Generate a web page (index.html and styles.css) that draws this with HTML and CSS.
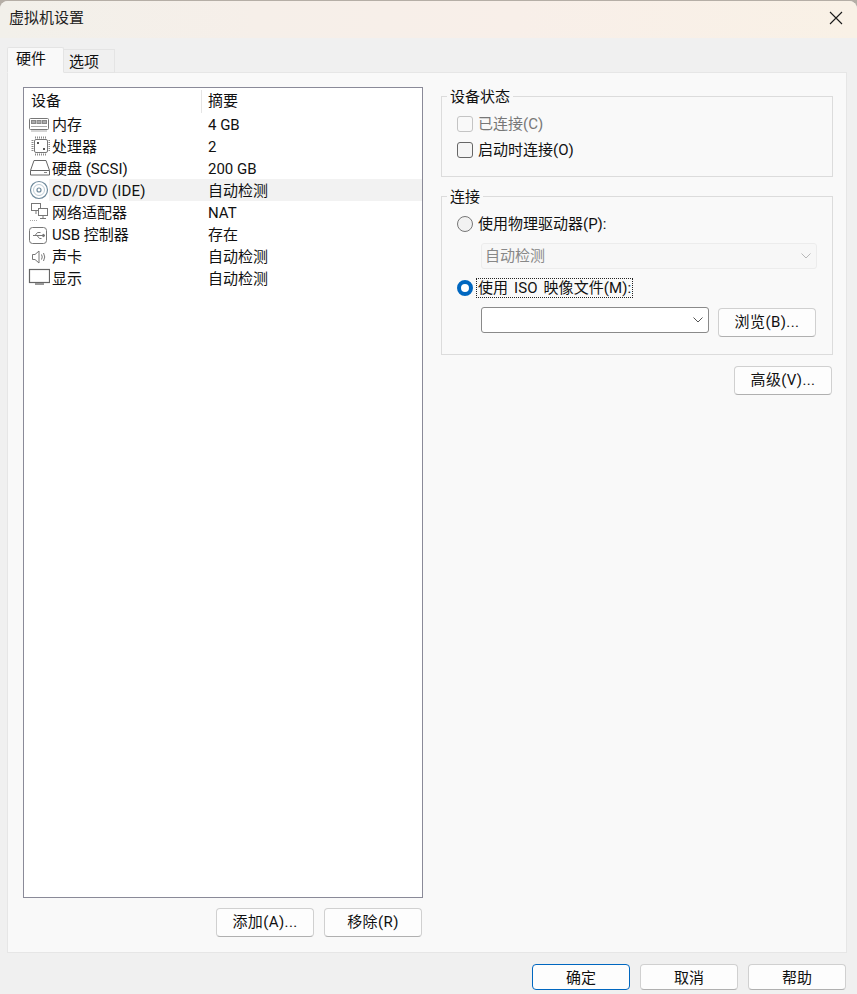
FILE: index.html
```html
<!DOCTYPE html>
<html lang="zh-CN">
<head>
<meta charset="utf-8">
<title>虚拟机设置</title>
<link rel="stylesheet" href="styles.css">
</head>
<body>
<div class="window">
  <header class="titlebar">
    <span class="title">虚拟机设置</span>
    <svg class="close" width="14" height="14" viewBox="0 0 14 14"><path d="M1 1L13 13M13 1L1 13" stroke="#1a1a1a" stroke-width="1.1" fill="none"/></svg>
  </header>
  <div class="tabs">
    <div class="tab active">硬件</div>
    <div class="tab">选项</div>
  </div>
  <main class="panel">
    <section class="left">
      <div class="list">
        <div class="list-head">
          <div class="h1">设备</div>
          <div class="h2">摘要</div>
        </div>
        <div class="row">
          <span class="ico"><svg width="22" height="22" viewBox="0 0 22 22" fill="none" stroke="#777"><rect x="1.500" y="5.500" width="19" height="11" rx="1"/><rect x="3.500" y="7.500" width="4" height="3" fill="#aaa" stroke="#888"/><rect x="9" y="7.500" width="4" height="3" fill="#aaa" stroke="#888"/><rect x="14.500" y="7.500" width="4" height="3" fill="#aaa" stroke="#888"/><path d="M3 13.500h16M3 18h16" stroke="#aaa"/></svg></span>
          <span class="name">内存</span><span class="val">4 GB</span>
        </div>
        <div class="row">
          <span class="ico"><svg width="22" height="22" viewBox="0 0 22 22" fill="none" stroke="#777"><rect x="6.500" y="4.500" width="13" height="13" rx="1.500"/><path d="M7 2.500h12M7 19.500h12M4.500 5v12M21.500 5v12" stroke="#8a8a8a" stroke-width="2" stroke-dasharray="1 1"/><rect x="9" y="7" width="2" height="2" fill="#555" stroke="none"/><rect x="15" y="13" width="2" height="2" fill="#555" stroke="none"/></svg></span>
          <span class="name">处理器</span><span class="val">2</span>
        </div>
        <div class="row">
          <span class="ico"><svg width="22" height="22" viewBox="0 0 22 22" fill="none" stroke="#666"><path d="M2.500 13.500L6 3.500h12l3.500 10v4.500h-19zM2.500 13.500h19"/><path d="M16 15.500h3" stroke="#888"/></svg></span>
          <span class="name">硬盘 (SCSI)</span><span class="val">200 GB</span>
        </div>
        <div class="row selected">
          <span class="ico"><svg width="22" height="22" viewBox="0 0 22 22" fill="none" stroke="#6f8a9c"><circle cx="11" cy="11" r="8.500" stroke-width="1.200"/><circle cx="11" cy="11" r="5.500" stroke="#bccbd5"/><circle cx="11" cy="11" r="2" stroke-width="1.200"/></svg></span>
          <span class="name wide">CD/DVD (IDE)</span><span class="val">自动检测</span>
        </div>
        <div class="row">
          <span class="ico"><svg width="22" height="22" viewBox="0 0 22 22" fill="none" stroke="#777"><rect x="3.500" y="2.500" width="9" height="7"/><path d="M8 10v3"/><rect x="10.500" y="7.500" width="9" height="7" fill="#fff"/><path d="M15 15v2M12 17.500h6" /><path d="M2 19.500h8" stroke="#aaa" stroke-dasharray="1 1"/></svg></span>
          <span class="name">网络适配器</span><span class="val">NAT</span>
        </div>
        <div class="row">
          <span class="ico"><svg width="22" height="22" viewBox="0 0 22 22" fill="none" stroke="#777"><rect x="1.500" y="4.500" width="17" height="16" rx="3"/><path d="M5 12.500h10M7 12.500l2.500-3h3M9 12.500l2.500 3h2" stroke-width="1"/><path d="M15 11l2 1.500-2 1.500z" fill="#777"/></svg></span>
          <span class="name">USB 控制器</span><span class="val">存在</span>
        </div>
        <div class="row">
          <span class="ico"><svg width="22" height="22" viewBox="0 0 22 22" fill="none" stroke="#777"><path d="M4.500 9.500h2.500l4-3.500v12l-4-3.500H4.500z"/><path d="M13.500 9.500q1.500 2.500 0 5M15.500 8q2.500 4 0 8" stroke-width="1"/></svg></span>
          <span class="name">声卡</span><span class="val">自动检测</span>
        </div>
        <div class="row">
          <span class="ico"><svg width="22" height="22" viewBox="0 0 22 22" fill="none" stroke="#666"><rect x="1.500" y="2.500" width="20" height="13" stroke-width="1.200"/><path d="M7 17h9" stroke-width="2" stroke="#999"/></svg></span>
          <span class="name">显示</span><span class="val">自动检测</span>
        </div>
      </div>
      <div class="btn-row">
        <button class="btn">添加(A)...</button>
        <button class="btn">移除(R)</button>
      </div>
    </section>
    <section class="right">
      <div class="group status">
        <div class="legend">设备状态</div>
        <div class="opt disabled"><span class="check"></span><span>已连接(C)</span></div>
        <div class="opt"><span class="check"></span><span>启动时连接(O)</span></div>
      </div>
      <div class="group conn">
        <div class="legend">连接</div>
        <div class="opt"><span class="radio"></span><span>使用物理驱动器(P):</span></div>
        <div class="select off"><span>自动检测</span><svg width="10" height="6" viewBox="0 0 10 6"><path d="M.5.5L5 5 9.500.5" fill="none" stroke="#b8b8b8"/></svg></div>
        <div class="opt on"><span class="radio checked"></span><span class="focus">使用 ISO 映像文件(M):</span></div>
        <div class="iso-row">
          <div class="select iso"><span></span><svg width="10" height="6" viewBox="0 0 10 6"><path d="M.5.5L5 5 9.500.5" fill="none" stroke="#555"/></svg></div>
          <button class="btn">浏览(B)...</button>
        </div>
      </div>
      <div class="adv"><button class="btn">高级(V)...</button></div>
    </section>
  </main>
  <footer class="footer">
    <button class="btn small primary">确定</button>
    <button class="btn small">取消</button>
    <button class="btn small">帮助</button>
  </footer>
</div>
</body>
</html>
```
FILE: styles.css
```css
* { box-sizing: border-box; }
html, body { margin: 0; height: 100%; }
body {
  background: #b5aea6;
  font: 15px/22px Roboto, "Noto Sans CJK SC", sans-serif;
  color: #111;
  overflow: hidden;
}
.window {
  height: 994px;
  margin-top: 1px;
  display: flex;
  flex-direction: column;
  background: #f0f0f0;
  border-radius: 8px 8px 0 0;
  overflow: hidden;
}
.titlebar {
  height: 37px;
  flex: none;
  display: flex;
  align-items: center;
  justify-content: space-between;
  padding: 0 14px 3px 9px;
  background: linear-gradient(90deg, #f2f0ea 0%, #f6efe9 30%, #f8efe9 60%, #f9f1e6 100%);
}
.title { font-size: 15px; color: #222; }
.tabs {
  height: 35px;
  flex: none;
  display: flex;
  align-items: flex-end;
  padding-left: 7px;
  margin-bottom: -1px;
  position: relative;
  z-index: 1;
}
.tab {
  width: 51px;
  height: 24px;
  padding-left: 5px;
  background: #f0f0f0;
  border: 1px solid #e4e4e4;
  border-bottom: 1px solid #e4e4e4;
  border-left: none;
  line-height: 24px;
  font-size: 15px;
}
.tab.active {
  width: 57px;
  height: 26px;
  padding-left: 8px;
  line-height: 22px;
  background: #f9f9f9;
  border-left: 1px solid #e4e4e4;
  border-bottom-color: #f9f9f9;
  border-radius: 2px 2px 0 0;
}
.panel {
  height: 881px;
  flex: none;
  margin: 0 10px 0 7px;
  background: #f9f9f9;
  border: 1px solid #e6e6e6;
  display: flex;
  padding: 14px 13px 15px 15px;
  gap: 18px;
}
.left { width: 400px; flex: none; display: flex; flex-direction: column; }
.list {
  height: 811px;
  background: #fff;
  border: 1px solid #8a8a98;
}
.list-head { display: flex; height: 25px; padding-top: 2px; }
.h1 { width: 178px; padding-left: 7px; border-right: 1px solid #e5e5e5; }
.h2 { padding-left: 6px; }
.row { display: flex; height: 22px; }
.ico { width: 25px; padding-left: 4px; flex: none; height: 22px; }
.ico svg { display: block; }
.name { width: 152px; flex: none; padding: 1px 0 0 3px; white-space: nowrap; }
.name.wide { letter-spacing: .18px; }
.val { flex: 1; padding: 1px 0 0 7px; }
.selected .name, .selected .val { background: #f2f2f2; }
.btn-row { display: flex; justify-content: flex-end; gap: 10px; margin-top: 10px; padding-right: 1px; }
.btn {
  width: 98px;
  height: 29px;
  padding: 0 0 2px;
  font: inherit;
  letter-spacing: .4px;
  color: #111;
  background: #fdfdfd;
  border: 1px solid #d0d0d0;
  border-bottom-color: #b0b0b0;
  border-radius: 4px;
}
.btn.small { height: 26px; padding: 1px 0 0; letter-spacing: 0; }
.btn.primary { border: 1px solid #0067c0; }
.right { flex: 1; display: flex; flex-direction: column; padding-top: 9px; }
.group {
  border: 1px solid #dcdcdc;
  padding: 0 15px;
  position: relative;
}
.legend {
  position: absolute;
  left: 5px;
  top: -11px;
  padding: 0 3px;
  background: #f9f9f9;
}
.status { height: 81px; padding-top: 16px; margin-bottom: 19px; }
.status .opt + .opt { margin-top: 4px; }
.conn { height: 159px; padding-top: 16px; }
.opt { display: flex; align-items: center; height: 22px; gap: 5px; }
.opt.disabled { color: #777; }
.check {
  width: 16px;
  height: 16px;
  border: 1px solid #666;
  border-radius: 3px;
  background: #f5f5f5;
}
.disabled .check { border-color: #c4c4c4; background: #f9f9f9; }
.radio {
  width: 16px;
  height: 16px;
  border: 1px solid #777;
  border-radius: 50%;
  background: #f2f2f2;
}
.radio.checked { border: 4.5px solid #0067c0; background: #fff; }
.focus { outline: 1px dotted #222; padding: 0 1px; margin-left: -1px; line-height: 18px; word-spacing: 2px; letter-spacing: .1px; }
.select {
  display: flex;
  align-items: center;
  justify-content: space-between;
  margin-left: 24px;
  padding: 0 5px 0 3px;
}
.select.off {
  height: 26px;
  width: 336px;
  margin-top: 8px;
  border: 1px solid #ececec;
  border-radius: 3px;
  background: #f7f7f7;
  color: #888;
}
.opt.on { margin-top: 8px; }
.iso-row { display: flex; align-items: flex-start; margin-top: 8px; gap: 9px; }
.select.iso {
  width: 228px;
  height: 26px;
  background: #fff;
  border: 1px solid #8a8a8a;
  border-radius: 3px;
}
.iso-row .btn { margin-top: 1px; }
.adv { display: flex; justify-content: flex-end; margin-top: 11px; padding-right: 1px; }
.footer {
  flex: 1;
  display: flex;
  justify-content: flex-end;
  gap: 10px;
  padding: 11px 11px 0 0;
}
```
